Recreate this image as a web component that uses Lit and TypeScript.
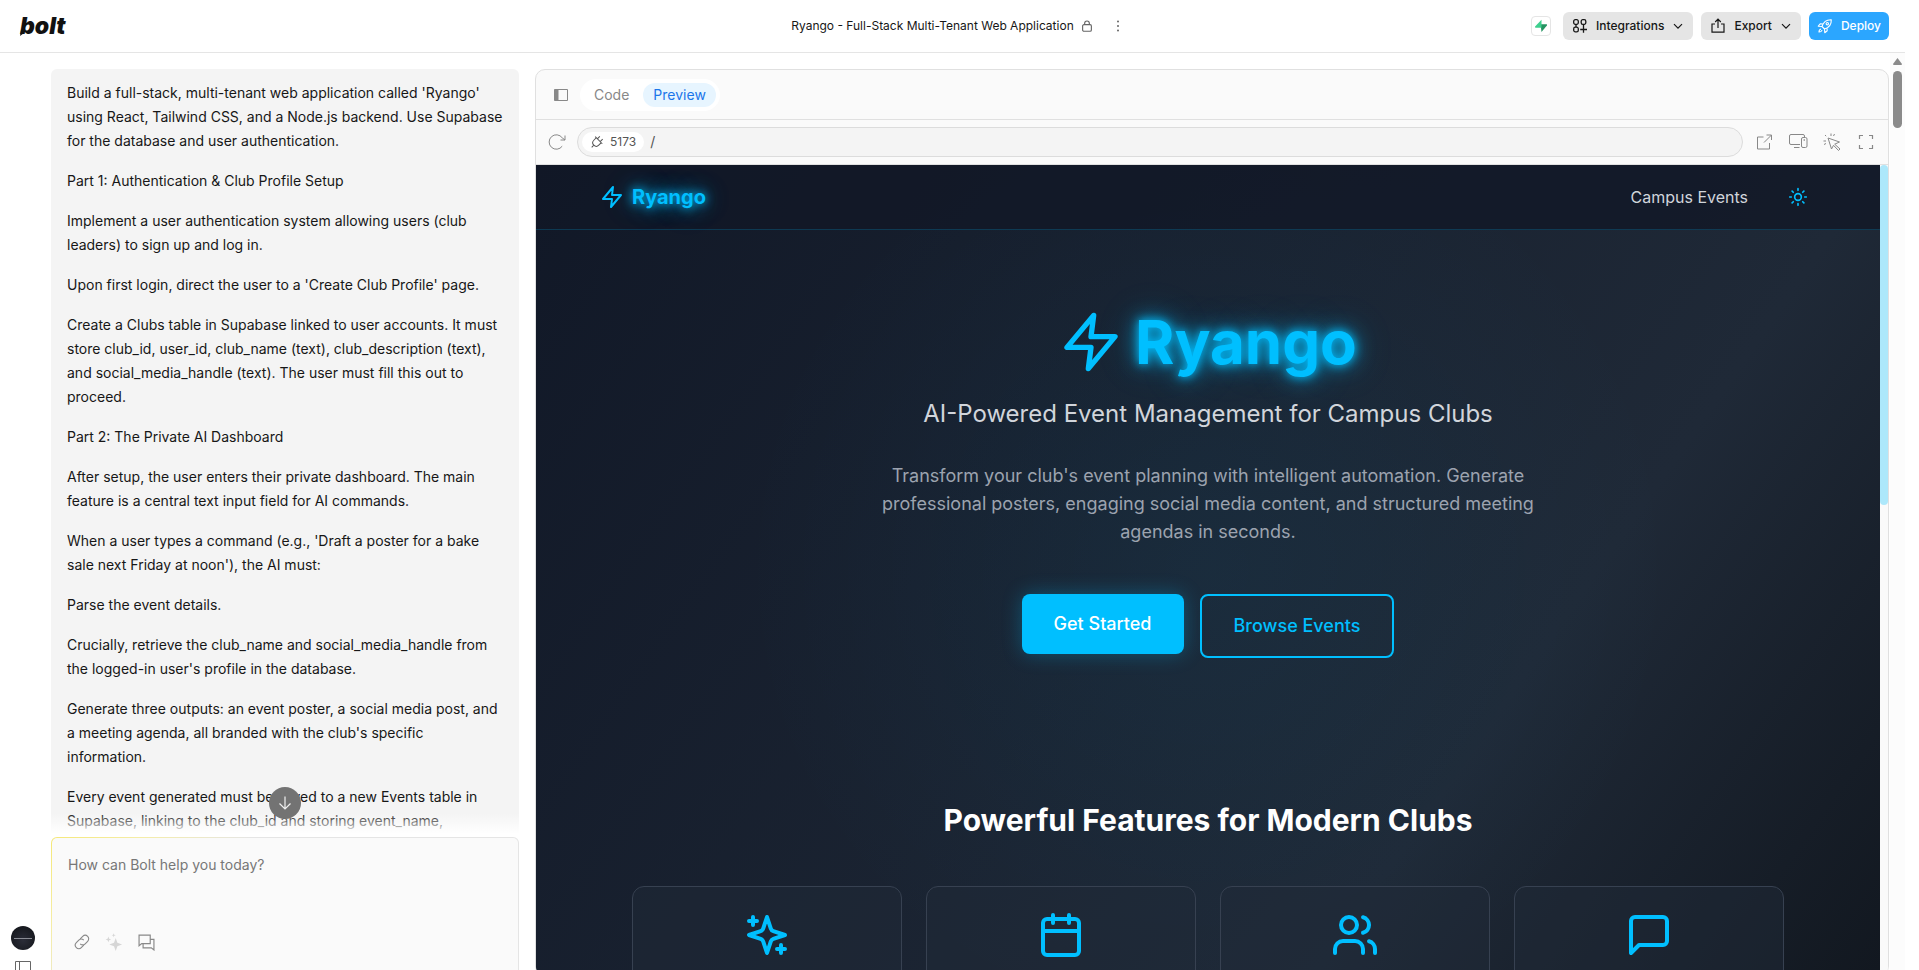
import { LitElement, html, css, svg } from "lit";
import { customElement } from "lit/decorators.js";

const prompt: string[] = [
  "Build a full-stack, multi-tenant web application called 'Ryango' using React, Tailwind CSS, and a Node.js backend. Use Supabase for the database and user authentication.",
  "Part 1: Authentication & Club Profile Setup",
  "Implement a user authentication system allowing users (club leaders) to sign up and log in.",
  "Upon first login, direct the user to a 'Create Club Profile' page.",
  "Create a Clubs table in Supabase linked to user accounts. It must store club_id, user_id, club_name (text), club_description (text), and social_media_handle (text). The user must fill this out to proceed.",
  "Part 2: The Private AI Dashboard",
  "After setup, the user enters their private dashboard. The main feature is a central text input field for AI commands.",
  "When a user types a command (e.g., 'Draft a poster for a bake sale next Friday at noon'), the AI must:",
  "Parse the event details.",
  "Crucially, retrieve the club_name and social_media_handle from the logged-in user's profile in the database.",
  "Generate three outputs: an event poster, a social media post, and a meeting agenda, all branded with the club's specific information.",
  "Every event generated must be saved to a new Events table in Supabase, linking to the club_id and storing event_name,",
];

const shapes = {
  zap: svg`<path d="M13 2 3 14h9l-1 8 10-12h-9l1-8z"/>`,
  sun: svg`<circle cx="12" cy="12" r="4"/><path d="M12 2v2M12 20v2M4.93 4.93l1.41 1.41M17.66 17.66l1.41 1.41M2 12h2M20 12h2M6.34 17.66l-1.41 1.41M19.07 4.93l-1.41 1.41"/>`,
  sparkles: svg`<path d="m12 3-1.912 5.813a2 2 0 0 1-1.275 1.275L3 12l5.813 1.912a2 2 0 0 1 1.275 1.275L12 21l1.912-5.813a2 2 0 0 1 1.275-1.275L21 12l-5.813-1.912a2 2 0 0 1-1.275-1.275L12 3ZM5 3v4M19 17v4M3 5h4M17 19h4"/>`,
  calendar: svg`<rect x="3" y="4" width="18" height="18" rx="2"/><path d="M16 2v4M8 2v4M3 10h18"/>`,
  users: svg`<path d="M16 21v-2a4 4 0 0 0-4-4H6a4 4 0 0 0-4 4v2"/><circle cx="9" cy="7" r="4"/><path d="M22 21v-2a4 4 0 0 0-3-3.87M16 3.13a4 4 0 0 1 0 7.75"/>`,
  message: svg`<path d="M21 15a2 2 0 0 1-2 2H7l-4 4V5a2 2 0 0 1 2-2h14a2 2 0 0 1 2 2z"/>`,
};

/* 24-unit outline icon */
const line = (name: keyof typeof shapes, size: number) => html`<svg class="line" width=${size} height=${size} viewBox="0 0 24 24" aria-hidden="true">${shapes[name]}</svg>`;

/* thin toolbar icon, drawn on a square grid of the given number of units */
const thin = (body: unknown, size = 16, grid = 16) => html`<svg class="thin" width=${size} height=${size} viewBox="0 0 ${grid} ${grid}" aria-hidden="true">${body}</svg>`;

const chevron = () => html`<svg class="thin" width="12" height="12" viewBox="0 0 12 12" aria-hidden="true"><path d="m2 4.200 4 4 4-4" stroke-width="1.200"/></svg>`;

@customElement("ryango-site")
class RyangoSite extends LitElement {
  static styles = css`
    * { box-sizing: border-box; margin: 0; }
    :host { display: flex; flex: 1; min-height: 0; overflow: hidden; background: #fafafa; border-radius: 0 0 8px 8px; color: #fff; }
    .view { flex: 1; min-width: 0; position: relative; overflow: hidden; }
    .page { min-height: 238%; background: linear-gradient(to bottom right, #111827, #1f2937, #000); }
    .glow { position: absolute; inset: 0; background: radial-gradient(circle at center, rgba(0, 191, 255, 0.05), transparent 60%); pointer-events: none; }
    .line { fill: none; stroke: currentColor; stroke-width: 2; stroke-linecap: round; stroke-linejoin: round; flex: none; }
    .bar { background: rgba(17, 24, 39, 0.8); border-bottom: 1px solid rgba(0, 191, 255, 0.2); position: relative; }
    .bar-in { max-width: 1280px; margin: 0 auto; padding: 0 32px; height: 64px; display: flex; align-items: center; justify-content: space-between; }
    .brand { display: flex; align-items: center; gap: 8px; color: #00bfff; font-size: 20px; line-height: 28px; font-weight: 700; text-decoration: none; }
    .neon { text-shadow: 0 0 10px #00bfff, 0 0 20px rgba(0, 191, 255, 0.8), 0 0 40px rgba(0, 191, 255, 0.3); }
    .links { display: flex; align-items: center; gap: 32px; }
    .links a { color: #d1d5db; font-size: 16px; line-height: 24px; text-decoration: none; }
    .theme { display: flex; padding: 8px; border: 0; background: none; color: #00bfff; }
    .hero { padding: 80px 32px; text-align: center; position: relative; }
    h1 { display: flex; align-items: center; justify-content: center; gap: 12px; color: #00bfff; font-size: 60px; line-height: 64px; font-weight: 700; }
    .sub { margin-top: 24px; font-size: 24px; line-height: 32px; color: #d1d5db; }
    .lead { max-width: 672px; margin: 32px auto 0; font-size: 18px; line-height: 28px; color: #9ca3af; }
    .cta { display: flex; justify-content: center; align-items: flex-start; gap: 16px; margin-top: 48px; }
    .cta a { padding: 16px 32px; border-radius: 8px; font-size: 18px; line-height: 28px; font-weight: 500; text-decoration: none; }
    .fill { background: #00bfff; color: #fff; box-shadow: 0 0 20px rgba(0, 191, 255, 0.3); }
    .cta .ring { border: 2px solid #00bfff; color: #00bfff; }
    .features { max-width: 1216px; margin: 0 auto; padding: 64px 32px; position: relative; }
    h2 { text-align: center; font-size: 30px; line-height: 36px; font-weight: 700; }
    .cards { display: grid; grid-template-columns: repeat(4, 1fr); gap: 24px; margin-top: 48px; }
    .card { min-height: 240px; padding: 24px; border: 1px solid #374151; border-radius: 12px; background: rgba(31, 41, 55, 0.5); color: #00bfff; display: flex; flex-direction: column; align-items: center; }
    .track { width: 8px; flex: none; }
    .thumb { height: 42%; background: #ade8fb; border-radius: 4px; }
  `;
  render() {
    return html`
      <div class="view">
        <div class="page">
          <div class="glow"></div>
          <nav class="bar"><div class="bar-in">
            <a class="brand" href="#">${line("zap", 24)}<span class="neon">Ryango</span></a>
            <div class="links"><a href="#events">Campus Events</a><button class="theme" aria-label="Toggle theme">${line("sun", 20)}</button></div>
          </div></nav>
          <section class="hero">
            <h1>${line("zap", 64)}<span class="neon">Ryango</span></h1>
            <p class="sub">AI-Powered Event Management for Campus Clubs</p>
            <p class="lead">Transform your club's event planning with intelligent automation. Generate professional posters, engaging social media content, and structured meeting agendas in seconds.</p>
            <div class="cta"><a class="fill" href="#start">Get Started</a><a class="ring" href="#events">Browse Events</a></div>
          </section>
          <section class="features">
            <h2>Powerful Features for Modern Clubs</h2>
            <div class="cards">
              ${(["sparkles", "calendar", "users", "message"] as const).map((n) => html`<div class="card">${line(n, 48)}</div>`)}
            </div>
          </section>
        </div>
      </div>
      <div class="track"><div class="thumb"></div></div>
    `;
  }
}

@customElement("app-root")
class AppRoot extends LitElement {
  static styles = css`
    * { box-sizing: border-box; margin: 0; }
    :host { display: flex; flex-direction: column; height: 100vh; overflow: hidden; padding-right: 14px; background: #fff; color: #171717; font-family: Inter, "Liberation Sans", sans-serif; font-size: 14px; line-height: 24px; }
    button, textarea, input { font: inherit; color: inherit; }
    button { border: 0; background: none; padding: 0; display: flex; align-items: center; justify-content: center; }
    .thin { fill: none; stroke: currentColor; stroke-width: 1; flex: none; }
    .solid { fill: currentColor; stroke: none; }
    header { flex: none; height: 53px; display: grid; grid-template-columns: 1fr auto 1fr; align-items: center; padding: 0 16px 0 20px; border-bottom: 1px solid #e5e5e5; font-size: 12px; line-height: 16px; }
    .logo { position: relative; justify-self: start; font-size: 23px; line-height: 28px; font-weight: 900; font-style: italic; color: #111; text-decoration: none; }
    .tail { position: absolute; left: 0; bottom: 4px; fill: #111; }
    .title { display: flex; align-items: center; gap: 6px; padding-left: 12px; }
    .title .thin { color: #666; }
    .dots { width: 24px; height: 24px; margin-left: 6px; color: #444; }
    .actions { display: flex; justify-content: flex-end; align-items: center; gap: 8px; }
    .supa { width: 20px; height: 20px; margin-right: 4px; border: 1px solid #e5e5e5; border-radius: 4px; background: #fff; }
    .act { height: 28px; padding: 0 9px; gap: 8px; border-radius: 6px; background: #e5e5e5; color: #171717; font-weight: 500; }
    .act.deploy { padding: 0 8px; background: #2ba6ff; color: #fff; }
    .body { flex: 1; min-height: 0; display: flex; }
    main { flex: 1; min-width: 0; display: flex; margin-bottom: -6px; }
    aside { width: 51px; flex: none; padding-left: 11px; display: flex; flex-direction: column; align-items: flex-start; justify-content: flex-end; gap: 11px; }
    .avatar { width: 24px; height: 24px; border-radius: 50%; background: radial-gradient(circle at 50% 60%, #2b2d38, #0f1115); }
    .avatar::after { content: ""; width: 18px; height: 1px; background: #8a8c94; }
    .dock { margin-left: 4px; height: 15px; align-items: flex-start; color: #666; }
    .chat { width: 468px; flex: none; display: flex; flex-direction: column; }
    .log { flex: 1; min-height: 0; padding-top: 16px; position: relative; overflow: hidden; }
    .msg { min-height: 100%; padding: 12px 16px; border-radius: 6px; background: #f4f4f4; display: flex; flex-direction: column; gap: 16px; }
    .fade { position: absolute; left: 0; right: 0; bottom: 0; height: 24px; background: linear-gradient(to bottom, rgba(255, 255, 255, 0), #fff 88%); }
    .down { position: absolute; left: 50%; bottom: 18px; width: 32px; height: 32px; margin-left: -16px; border-radius: 50%; background: #737373; color: #f0f0f0; }
    .compose { flex: none; padding: 1px; border-radius: 6px; background: radial-gradient(circle at 0 0, #f5e878, #f5eda8 90px, #e5e5e5 200px); }
    .compose-in { display: flex; flex-direction: column; border-radius: 5px; background: #fafafa; padding-bottom: 20px; }
    textarea { display: block; height: 91px; padding: 15px 16px 0; border: 0; outline: 0; resize: none; background: none; }
    textarea::placeholder { color: #777; opacity: 1; }
    .tools { display: flex; padding-left: 14px; color: #888; }
    .tools button { width: 32px; height: 26px; }
    .tools .off { color: #d6d6d6; }
    .panel { flex: 1; min-width: 0; margin: 16px 1px 0 16px; display: flex; flex-direction: column; border: 1px solid #e0e0e0; border-radius: 10px; background: #fafafa; }
    .tabs { height: 50px; flex: none; display: flex; align-items: center; gap: 11px; padding: 0 17px; border-bottom: 1px solid #e0e0e0; color: #888; }
    .seg { display: flex; gap: 4px; padding: 4px; border-radius: 16px; background: #fff; }
    .seg button { height: 24px; padding: 0 10px; border-radius: 12px; color: #888; }
    .seg .on { background: #e7f5ff; color: #1b76ea; }
    .address { height: 45px; flex: none; display: flex; align-items: center; gap: 11px; padding: 0 12px; border-bottom: 1px solid #e0e0e0; color: #888; }
    .field { flex: 1; height: 30px; display: flex; align-items: center; gap: 6px; padding: 0 4px; border: 1px solid #dcdcdc; border-radius: 15px; background: #f4f4f4; }
    .port { height: 20px; padding: 0 8px; gap: 6px; border-radius: 10px; background: #fff; color: #555; font-size: 12px; line-height: 16px; }
    .field input { flex: 1; border: 0; outline: 0; padding: 0; background: none; color: #555; }
    .ops { display: flex; gap: 14px; }
    .ops button { width: 20px; height: 20px; }
    .rail { width: 15px; flex: none; padding: 5px 3px; background: #fcfcfc; display: flex; flex-direction: column; align-items: center; gap: 6px; }
    .grip { width: 9px; height: 57px; border-radius: 5px; background: #8b8b8b; }
  `;
  render() {
    return html`
      <header>
        <a class="logo" href="#">bolt<svg class="tail" width="6" height="6" viewBox="0 0 6 6" aria-hidden="true"><path d="M1 0h4L4 3 0 6z"/></svg></a>
        <div class="title"><span>Ryango - Full-Stack Multi-Tenant Web Application</span>
          ${thin(svg`<g stroke-width="1.300"><rect x="3" y="6.500" width="10" height="7.500" rx="1.500"/><path d="M5.300 6.500V5a2.700 2.700 0 0 1 5.400 0v1.500"/></g>`, 14)}
          <button class="dots" aria-label="More">${thin(svg`<g class="solid"><circle cx="8" cy="3.500" r="1"/><circle cx="8" cy="8" r="1"/><circle cx="8" cy="12.500" r="1"/></g>`)}</button>
        </div>
        <div class="actions">
          <button class="supa" aria-label="Supabase"><svg width="14" height="14" viewBox="0 0 14 14" aria-hidden="true"><path d="M6.500 5.200h5.800c.7 0 1 .7.600 1.200L7.500 13z" fill="#249361"/><path d="M7.500 .8v8H1.700c-.7 0-1-.7-.6-1.200z" fill="#3ecf8e"/></svg></button>
          <button class="act">${thin(svg`<g stroke-width="1.300"><rect x="1.700" y="1.700" width="4.600" height="4.600" rx="1.600"/><rect x="9.200" y="1.700" width="4.600" height="4.600" rx="1.600"/><rect x="1.700" y="9.200" width="4.600" height="4.600" rx="1.600"/><path d="M11.500 8v6.800M8.200 11.500H15M4 6.300v2.900M11.500 6.300V8"/></g>`)}Integrations${chevron()}</button>
          <button class="act">${thin(svg`<g stroke-width="1.200"><path d="M5 6H2v8.200h12V6h-3M8 10V1.200M5.200 4 8 1.200 10.800 4"/></g>`)}Export${chevron()}</button>
          <button class="act deploy">${thin(svg`<g stroke-width="1.100" stroke-linejoin="round"><path d="M5 8.500C6 5.200 9 1.500 14.300 1.700 14.500 7 10.800 10 7.500 11zM6.200 6 3.200 5.800 1.300 8.200l3.700.3M10 9.800l.2 3-2.400 1.900-.3-3.700"/><path d="M4 11c-1.500.3-2 2-2 3 1 0 2.700-.4 3-2"/><circle cx="10.300" cy="5.700" r="1.200"/></g>`)}Deploy</button>
        </div>
      </header>
      <div class="body">
        <main>
          <aside>
            <button class="avatar" aria-label="Account"></button>
            <button class="dock" aria-label="Sidebar">${thin(svg`<path d="M.5 .5h15v12.500H.5zM4.500.5V13"/>`)}</button>
          </aside>
          <div class="chat">
            <div class="log">
              <div class="msg">${prompt.map((p) => html`<p>${p}</p>`)}</div>
              <div class="fade"></div>
              <button class="down" aria-label="Scroll to bottom">${thin(svg`<path d="M8 1.500v12.500M2.500 8.500 8 14l5.500-5.500" stroke-width="1.200"/>`)}</button>
            </div>
            <div class="compose"><div class="compose-in">
              <textarea aria-label="Message" placeholder="How can Bolt help you today?"></textarea>
              <div class="tools">
                <button aria-label="Attach link">${thin(svg`<g transform="rotate(-45 9 9)" stroke-width="1.100"><path d="M8 12.500H4.500a3.500 3.500 0 0 1 0-7H8A3.500 3.500 0 0 1 11.500 9M10 5.500h3.500a3.500 3.500 0 0 1 0 7H10A3.500 3.500 0 0 1 6.500 9"/></g>`, 18, 18)}</button>
                <button class="off" aria-label="Enhance prompt">${thin(svg`<g class="solid"><path d="M9.500 4.500 11 8.700l4.200 1.500L11 11.700l-1.500 4.200L8 11.700l-4.200-1.500L8 8.700zM3 3.200l.7 1.800 1.800.7-1.800.7L3 8.200l-.7-1.800L.5 5.700 2.300 5zM7.700.2l.5 1.300 1.300.5-1.300.5-.5 1.300-.5-1.300L5.900 2l1.300-.5z"/></g>`, 18)}</button>
                <button aria-label="Discuss">${thin(svg`<g stroke-width="1.100"><path d="M1 1h10.500v8H3.500L1 11zM11.500 5H15v10l-2.500-2H4.800V9"/></g>`, 17)}</button>
              </div>
            </div></div>
          </div>
          <section class="panel">
            <div class="tabs">
              <button aria-label="Toggle panel">${thin(svg`<path d="M1.500 2.500h13v11h-13z"/><path class="solid" d="M1.500 2.500h4v11h-4z"/>`)}</button>
              <div class="seg"><button>Code</button><button class="on">Preview</button></div>
            </div>
            <div class="address">
              <button aria-label="Reload">${thin(svg`<path d="M14.200 13.200A7.200 7.200 0 1 1 14.200 4.800L17 7M17 2.500V7h-4.500"/>`, 18, 18)}</button>
              <div class="field">
                <button class="port">${thin(svg`<g transform="rotate(45 7 7)"><path d="M7 14.500v-3M3.500 4.500h7V8a3.500 3.500 0 0 1-7 0zM2 4.500h10M5 4.500V1M9 4.500V1"/></g>`, 14, 14)}<span>5173</span></button>
                <input aria-label="Path" value="/">
              </div>
              <div class="ops">
                <button aria-label="Open in new tab">${thin(svg`<path d="M7.500 3h-6v12h12V9M10.500 1h5v5M15.500 1 8 8.500"/>`, 17, 17)}</button>
                <button aria-label="Device size">${thin(svg`<path d="M12 12.500H3A1.500 1.500 0 0 1 1.500 11V4A1.500 1.500 0 0 1 3 2.500h12A1.500 1.500 0 0 1 16.500 4v1M6 15.500h5.500"/><rect x="13.500" y="5.500" width="5.500" height="10" rx="1.500"/><path d="M16.200 7v2"/>`, 20, 20)}</button>
                <button aria-label="Select element">${thin(svg`<path d="m5 5 11.500 4-4.800 2.200 5.300 4.800-1.500 1.500-5-5.200L8.500 16zM8 .5v2.500M11.500 1 10.500 3M.5 8H3M1 11.500l2-1M2 2l1.200 1.200"/>`, 18, 18)}</button>
                <button aria-label="Fullscreen">${thin(svg`<path d="M1.500 5V1.500H5M11 1.500h3.500V5M14.500 11v3.500H11M5 14.500H1.500V11" stroke-width="1.200"/>`)}</button>
              </div>
            </div>
            <ryango-site></ryango-site>
          </section>
        </main>
        <div class="rail">
          <svg width="9" height="7" viewBox="0 0 9 7" aria-hidden="true"><path d="M4.500 0 9 6q0 1-1 1H1Q0 7 0 6z" fill="#8b8b8b"/></svg>
          <div class="grip"></div>
        </div>
      </div>
    `;
  }
}
